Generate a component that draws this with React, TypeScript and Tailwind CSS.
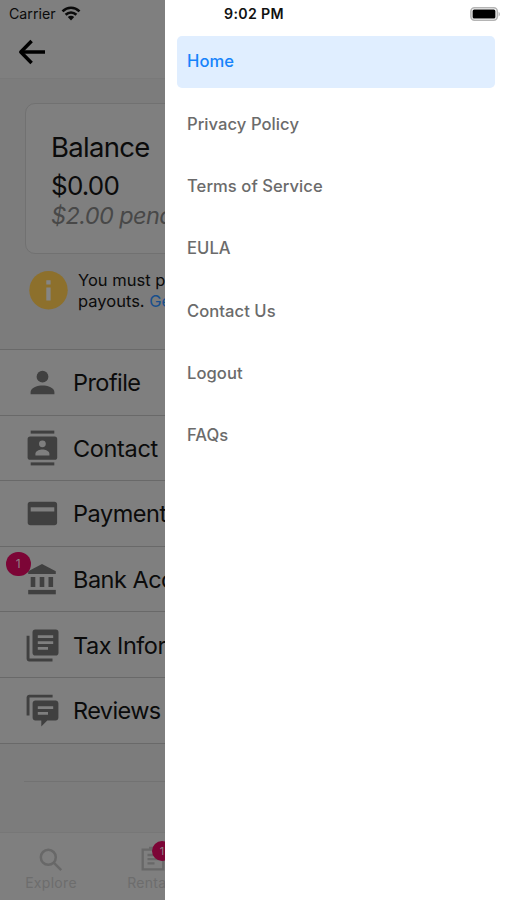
import type { ReactNode } from "react";

function PersonIcon() {
  return (
    <svg width="33" height="33" viewBox="0 0 33 33" fill="#404040">
      <circle cx="16.5" cy="10.7" r="5.9" />
      <path d="M4.6 28.3v-2.2c0-4.6 7.6-6.5 11.9-6.5s11.9 1.9 11.9 6.5v2.2z" />
    </svg>
  );
}

function ContactsIcon() {
  return (
    <svg width="33" height="36" viewBox="0 0 33 36" fill="#404040">
      <rect x="4.7" y="0.6" width="23.6" height="3" />
      <rect x="4.7" y="32.4" width="23.6" height="3" />
      <rect x="1.6" y="6.4" width="29.6" height="23.4" rx="2.6" />
      <circle cx="16.4" cy="13.8" r="3.4" fill="#7f7f7f" />
      <path d="M9.4 25.4v-1.7c0-2.8 4.5-4.2 7-4.2s7 1.4 7 4.2v1.7z" fill="#7f7f7f" />
    </svg>
  );
}

function CardIcon() {
  return (
    <svg width="33" height="33" viewBox="0 0 33 33" fill="#404040">
      <rect x="1.7" y="4.7" width="29.4" height="23.6" rx="2.8" />
      <rect x="4.7" y="10.3" width="23.6" height="4.2" fill="#7f7f7f" />
    </svg>
  );
}

function BankIcon() {
  return (
    <svg width="33" height="33" viewBox="0 0 33 33" fill="#404040">
      <path d="M16 1 29.8 8.2v2.9H2.2V8.2z" />
      <rect x="4.7" y="14" width="4.6" height="10" />
      <rect x="13.7" y="14" width="4.6" height="10" />
      <rect x="22.5" y="14" width="4.6" height="10" />
      <rect x="2.2" y="26.9" width="27.6" height="4.4" />
    </svg>
  );
}

function TaxIcon() {
  return (
    <svg width="33" height="33" viewBox="0 0 33 33">
      <path d="M.6 6.7h2.9v22.8h23v2.9H3.3c-1.6 0-2.7-1.2-2.7-2.7z" fill="#404040" />
      <rect x="6.5" y=".6" width="26" height="26" rx="2.8" fill="#404040" />
      <path d="M11.8 7.6h15.4M11.8 13.6h15.4M11.8 19.4h10.2" stroke="#7f7f7f" strokeWidth="2.7" />
    </svg>
  );
}

function ReviewsIcon() {
  return (
    <svg width="33" height="33" viewBox="0 0 33 33">
      <path d="M.6 21.5V3.6C.6 2 1.8.8 3.4.8h23.2v2.8H3.5v17.9z" fill="#404040" />
      <path d="M9.4 6.6h20.2c1.6 0 2.8 1.2 2.8 2.7v14.5c0 1.6-1.2 2.8-2.8 2.8h-8.3l-6 5.9v-5.9H9.4c-1.6 0-2.8-1.2-2.8-2.8V9.3c0-1.5 1.2-2.7 2.8-2.7z" fill="#404040" />
      <path d="M11.8 13.6h15.4M11.8 19.4h10.2" stroke="#7f7f7f" strokeWidth="2.7" />
    </svg>
  );
}

function WifiIcon() {
  return (
    <svg className="-mt-[2px]" width="20" height="15" viewBox="0 0 20 15" fill="none" stroke="#0b0b0b" strokeWidth="2.6">
      <path d="M1.5 5.4C6.5.5 13.5.5 18.5 5.4" />
      <path d="M4.6 8.8c3.2-3 7.6-3 10.8 0" />
      <path d="m10 14.4-3.2-3.4c1.8-1.6 4.6-1.6 6.4 0z" fill="#0b0b0b" stroke="none" />
    </svg>
  );
}

const rows: { label: string; icon: ReactNode; badge?: string; tracking: string }[] = [
  { label: "Profile", icon: <PersonIcon />, tracking: "tracking-[-0.55px]" },
  { label: "Contact", icon: <ContactsIcon />, tracking: "tracking-[-0.35px]" },
  { label: "Payment", icon: <CardIcon />, tracking: "tracking-[-0.45px]" },
  { label: "Bank Account", icon: <BankIcon />, badge: "1", tracking: "tracking-[-0.5px]" },
  { label: "Tax Information", icon: <TaxIcon />, tracking: "tracking-[-0.5px]" },
  { label: "Reviews", icon: <ReviewsIcon />, tracking: "tracking-[-0.6px]" },
];

const links = ["Home", "Privacy Policy", "Terms of Service", "EULA", "Contact Us", "Logout", "FAQs"];

function AccountPage() {
  return (
    <div className="flex w-[165px] shrink-0 flex-col overflow-hidden whitespace-nowrap bg-[#7c7c7c] text-[#0b0b0b]">
      <header className="h-[79px] shrink-0 border-b border-[#797979] bg-[#7f7f7f]">
        <div className="flex h-7 items-center gap-[5px] pl-[9px] text-[14.2px]">
          <span>Carrier</span>
          <WifiIcon />
        </div>
        <svg className="ml-[18px] mt-[11px]" width="28" height="26" viewBox="0 0 28 26" fill="none" stroke="#000" strokeWidth="3.5">
          <path d="M27 13H3" />
          <path d="M13.6 2 2.8 13l10.8 11" strokeLinejoin="round" />
        </svg>
      </header>

      <section className="ml-[25px] mt-6 h-[151px] w-[457px] shrink-0 rounded-[10px] border border-[#717171] bg-[#7f7f7f] pl-[25px] pt-[25px]">
        <h1 className="h-[37px] text-[27.5px] leading-[37px] tracking-[-0.7px]">Balance</h1>
        <p className="mt-[3px] h-[33px] text-[26px] leading-[34px] tracking-[-0.8px]">$0.00</p>
        <p className="h-[28px] text-[23.5px] italic leading-[28px] tracking-[-0.6px] text-[#484848]">$2.00 pending</p>
      </section>

      <section className="mt-4 flex h-[79px] shrink-0 pl-[29px]">
        <svg className="mt-[1px] shrink-0" width="39" height="39" viewBox="0 0 39 39">
          <circle cx="19.5" cy="19.2" r="19.2" fill="#8d702c" />
          <path d="M17.3 9.3h4.3v4.2h-4.3zM17.3 16.4h4.3v13h-4.3z" fill="#858585" />
        </svg>
        <p className="-mt-[0.5px] ml-[10px] text-[16.5px] leading-[21px]">
          You must put
          <br />
          payouts. <span className="text-[#174f8c]">Get</span>
        </p>
      </section>

      <nav className="shrink-0 border-t border-[#696969] bg-[#7f7f7f]">
        {rows.map((row) => (
          <div key={row.label} className="relative flex h-[65.6px] items-center border-b border-[#696969] pl-[26px] pt-[1px]">
            <div className="flex w-[33px] shrink-0 justify-center">{row.icon}</div>
            <span className={`ml-[14px] text-[23.5px] ${row.tracking}`}>{row.label}</span>
            {row.badge && (
              <span className="absolute left-[6px] top-[5px] flex size-[24.5px] items-center justify-center rounded-full bg-[#7c0536] text-[12px] text-[#8e8087]">
                {row.badge}
              </span>
            )}
          </div>
        ))}
      </nav>

      <div className="ml-6 h-[38px] shrink-0 border-b border-[#727272]" />

      <footer className="mt-auto flex h-[68px] w-[507px] shrink-0 border-t border-[#777777] bg-[#7f7f7f] text-[14px] text-[#6d6d6d]">
        <div className="flex w-[102px] shrink-0 flex-col items-center pt-[15px]">
          <svg width="24" height="24" viewBox="0 0 24 24" fill="none" stroke="#686868" strokeWidth="2.5">
            <circle cx="9.3" cy="9.3" r="7.5" />
            <path d="m14.7 14.7 7.5 7.5" />
          </svg>
          <span className="mt-[1px] leading-[20px] tracking-[0.3px]">Explore</span>
        </div>
        <div className="relative flex w-[101px] shrink-0 flex-col items-center pt-[13px]">
          <svg width="24" height="25" viewBox="0 0 24 25" fill="none" stroke="#686868" strokeWidth="2.3">
            <path d="M1.7 3.6h20.6v19.7H1.7zM6.5 9h11M6.5 13.2h11M6.5 17.4h7M8 1.9h8" />
          </svg>
          <span className="mt-[2px] leading-[20px] tracking-[0.3px]">Rentals</span>
          <span className="absolute left-[50px] top-[8px] flex size-[20px] items-center justify-center rounded-full bg-[#7c0536] text-[11px] text-[#8e8087]">
            1
          </span>
        </div>
      </footer>
    </div>
  );
}

function Drawer() {
  return (
    <aside className="flex flex-1 flex-col bg-white">
      <div className="flex h-[27px] items-center justify-between pl-[59px] pr-[6px]">
        <span className="text-[14.2px] font-semibold tracking-[0.35px] text-[#111]">9:02 PM</span>
        <svg width="31" height="14" viewBox="0 0 31 14">
          <rect x=".9" y=".8" width="26.4" height="12.4" rx="3.6" fill="#fff" stroke="#b4b4b4" strokeWidth="1.6" />
          <rect x="2.6" y="2.5" width="22.8" height="9" rx="1.5" fill="#000" />
          <path d="M28.6 5v4.4c1.7-.6 1.7-3.8 0-4.4z" fill="#b4b4b4" />
        </svg>
      </div>
      <nav className="mt-[8.8px] flex flex-col gap-[10.3px] px-3">
        {links.map((label, i) => (
          <a
            key={label}
            className={`flex h-[52px] items-center rounded-[5px] pl-[10px] text-[16.6px] font-medium tracking-[0.05px] ${
              i === 0 ? "bg-[#e0eeff] text-[#1683fb]" : "text-[#6b6b6b]"
            }`}
          >
            {label}
          </a>
        ))}
      </nav>
    </aside>
  );
}

export default function App() {
  return (
    <div className="flex h-[900px] w-[507px] overflow-hidden bg-white font-['Inter','Liberation_Sans',sans-serif]">
      <AccountPage />
      <Drawer />
    </div>
  );
}
